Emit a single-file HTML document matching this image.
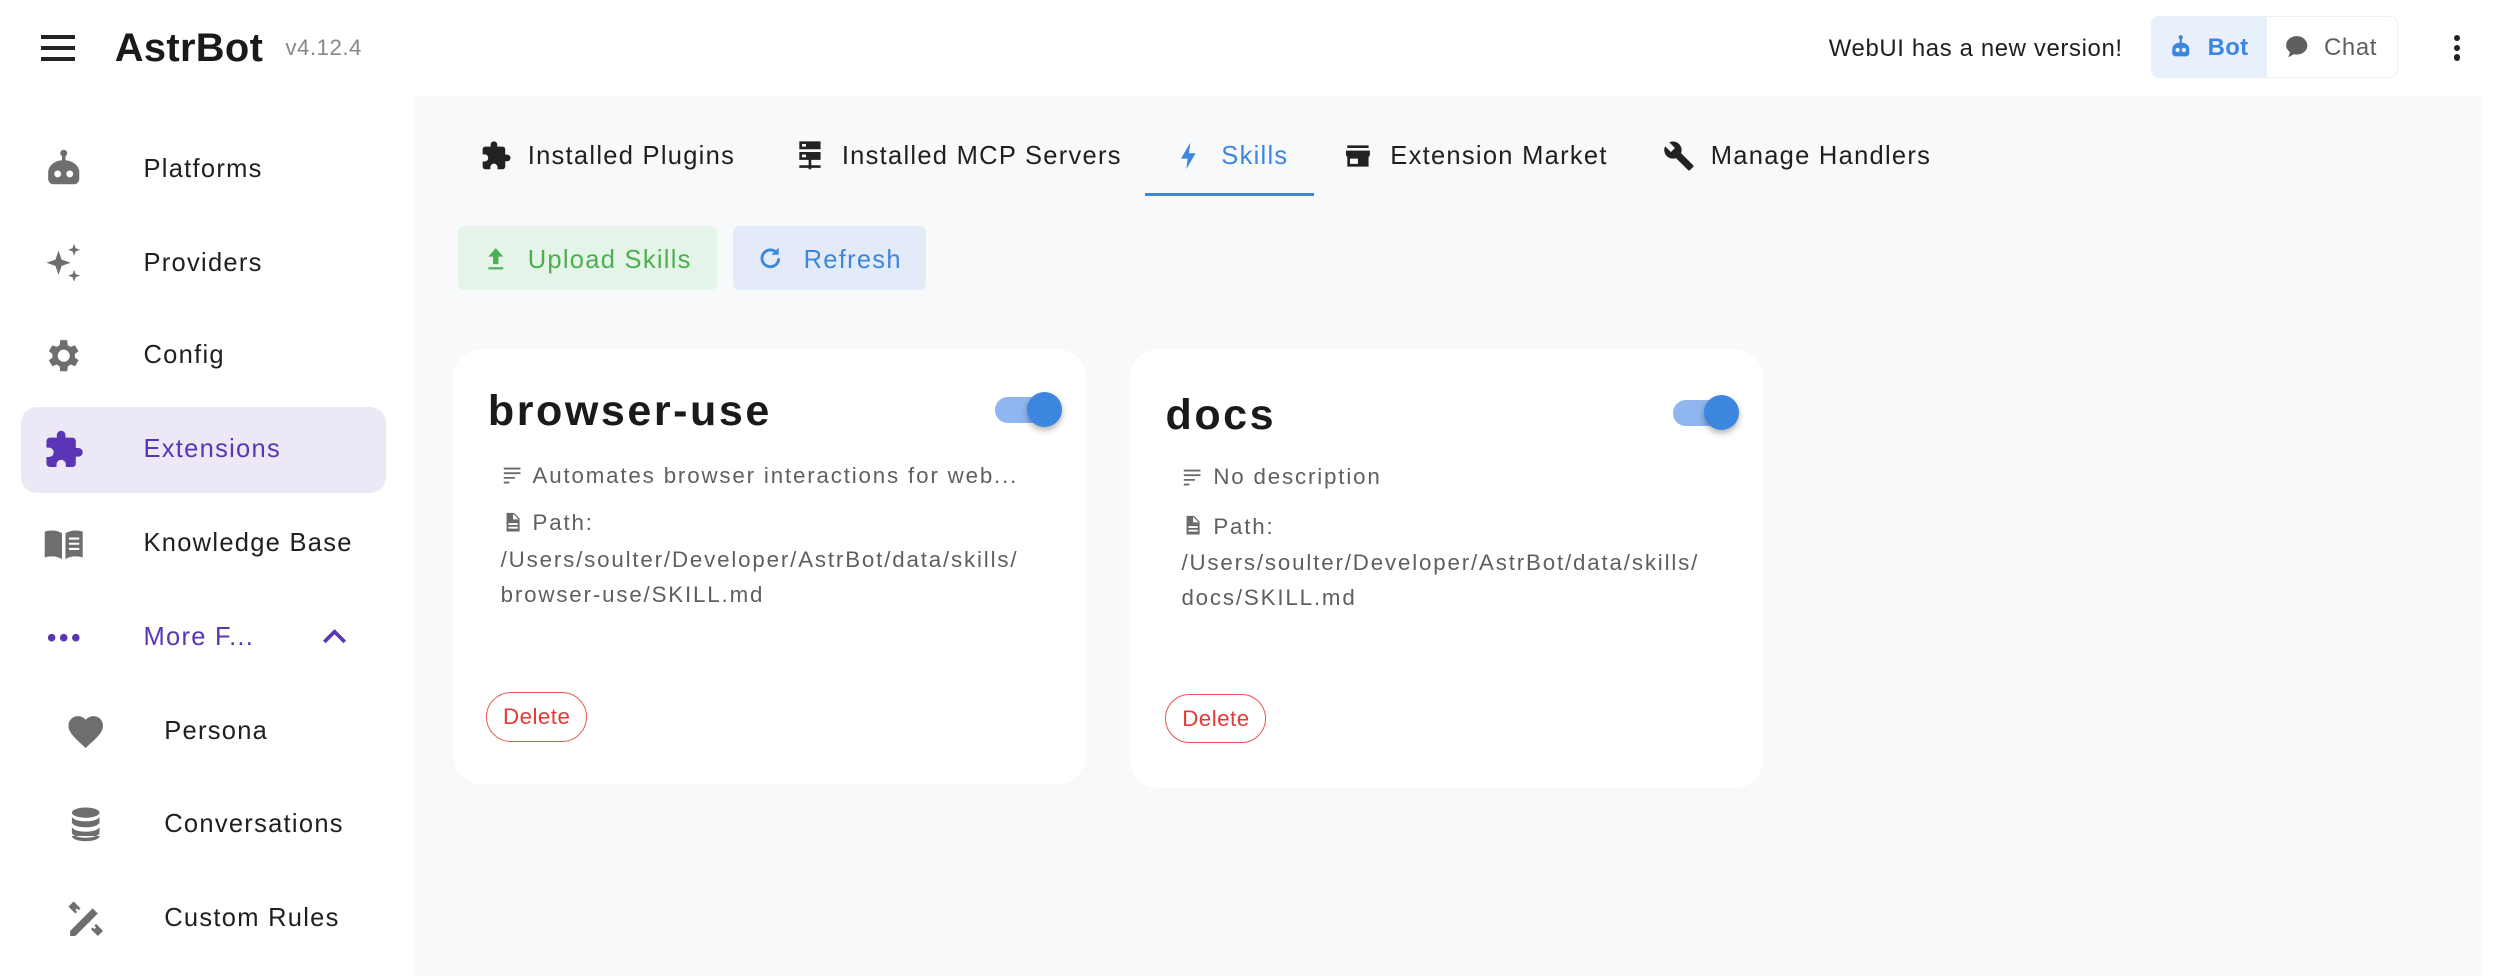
<!DOCTYPE html>
<html><head><meta charset="utf-8"><style>
html,body{margin:0;padding:0;width:2500px;height:976px;overflow:hidden;background:#fff}
#w{zoom:1.5944;width:1568px;height:612px;position:relative;font-family:"Liberation Sans",sans-serif;color:#1f1f1f;letter-spacing:0.8px}
.a{position:absolute}
.main{left:260px;top:60px;width:1296px;height:552px;background:#f8f9fb}
.si{position:absolute;left:0;width:260px;height:56px;font-size:16px}
.si svg{position:absolute;left:27px;top:16px;width:26px;height:26px;fill:#6e6e6e}
.si span{position:absolute;left:90px;top:20px}
.sub svg{left:41px}.sub span{left:103px}
.tab{position:absolute;top:88px;font-size:16px;font-weight:500;display:flex;align-items:center;gap:10px;white-space:nowrap}
.tab svg{width:20px;height:20px;fill:#222}
.card{position:absolute;top:219px;width:397px;height:273px;background:#fff;border-radius:18px}
.card h2{position:absolute;left:22px;top:24px;margin:0;font-size:27px;font-weight:700;color:#1a1a1a;letter-spacing:1.6px}
.tg{position:absolute;left:340px;top:30px;width:38px;height:16px;border-radius:8px;background:#8fb6ee}
.tg:after{content:"";position:absolute;right:-4px;top:-3px;width:22px;height:22px;border-radius:50%;background:#3d86e0;box-shadow:0 2px 4px rgba(0,0,0,.3)}
.ln{position:absolute;left:30px;font-size:14px;color:#5f5f5f;line-height:22px;white-space:nowrap;letter-spacing:1.15px}
.ln svg{width:14px;height:14px;fill:#6a6a6a;vertical-align:-2px;margin-right:6px}
.del{position:absolute;left:21px;top:215px;width:62px;height:30px;border:1px solid #e8574c;border-radius:16px;color:#e53935;font-size:14px;text-align:center;line-height:30px;letter-spacing:0.3px}
</style></head><body><div id="w">
<!-- header -->
<div class="a" style="left:26px;top:22px;width:21px;height:16px">
<div style="height:2.4px;background:#222;margin-bottom:4.4px"></div><div style="height:2.4px;background:#222;margin-bottom:4.4px"></div><div style="height:2.4px;background:#222"></div></div>
<div class="a" style="left:72px;top:16px;font-size:25px;font-weight:700;color:#1a1a1a;letter-spacing:0.2px">AstrBot</div>
<div class="a" style="left:179px;top:22px;font-size:14px;color:#888;letter-spacing:0.3px">v4.12.4</div>
<div class="a" style="left:1147px;top:22px;font-size:15px;color:#1f1f1f;letter-spacing:0.4px">WebUI has a new version!</div>
<div class="a" style="left:1349px;top:10px;width:155px;height:39px;border:1px solid #eceff3;border-radius:5px;overflow:hidden;box-sizing:border-box">
<div class="a" style="left:0;top:0;width:72px;height:39px;background:#e8f0fb"></div>
<svg class="a" style="left:10px;top:11px" width="16" height="16" viewBox="0 0 24 24" fill="#3d86e0"><circle cx="12" cy="3" r="2"/><rect x="11" y="3" width="2" height="5"/><path d="M4 14a8 6 0 0 1 16 0v4a3 3 0 0 1-3 3H7a3 3 0 0 1-3-3z"/><circle cx="9" cy="15" r="2" fill="#e8f0fb"/><circle cx="15" cy="15" r="2" fill="#e8f0fb"/></svg>
<div class="a" style="left:35px;top:11px;font-size:15px;font-weight:700;color:#3d86e0;letter-spacing:0.2px">Bot</div>
<svg class="a" style="left:83px;top:11px" width="16" height="16" viewBox="0 0 24 24" fill="#5f5f5f"><path d="M12 2C6.5 2 2 5.8 2 10.5c0 2.6 1.4 4.9 3.6 6.5L4 22l5.2-3c.9.2 1.8.3 2.8.3 5.5 0 10-3.8 10-8.5S17.5 2 12 2z"/></svg>
<div class="a" style="left:108px;top:11px;font-size:15px;color:#5f5f5f;letter-spacing:0.4px">Chat</div>
</div>
<div class="a" style="left:1539px;top:22px;width:4px"><div style="width:4px;height:4px;border-radius:2px;background:#222;margin-bottom:2px"></div><div style="width:4px;height:4px;border-radius:2px;background:#222;margin-bottom:2px"></div><div style="width:4px;height:4px;border-radius:2px;background:#222"></div></div>

<!-- sidebar -->
<div class="si" style="top:77px"><svg viewBox="0 0 24 24"><circle cx="12" cy="3" r="2"/><rect x="11" y="3" width="2" height="5"/><path d="M3 14a9 7 0 0 1 18 0v4a3 3 0 0 1-3 3H6a3 3 0 0 1-3-3z"/><circle cx="8.5" cy="15" r="2" fill="#fff"/><circle cx="15.5" cy="15" r="2" fill="#fff"/></svg><span>Platforms</span></div>
<div class="si" style="top:136px"><svg viewBox="0 0 24 24"><path d="M9 5l1.8 5.2L16 12l-5.2 1.8L9 19l-1.8-5.2L2 12l5.2-1.8z"/><path d="M18 1l.9 2.6L21.5 4.5l-2.6.9L18 8l-.9-2.6L14.5 4.5l2.6-.9z"/><path d="M18 16l.9 2.6 2.6.9-2.6.9L18 23l-.9-2.6-2.6-.9 2.6-.9z"/></svg><span>Providers</span></div>
<div class="si" style="top:194px"><svg viewBox="0 0 24 24"><path d="M19.4 13a7.5 7.5 0 0 0 0-2l2.1-1.6-2-3.5-2.5 1a7 7 0 0 0-1.7-1L15 3h-4l-.4 2.9a7 7 0 0 0-1.7 1l-2.5-1-2 3.5L6.5 11a7.5 7.5 0 0 0 0 2l-2.1 1.6 2 3.5 2.5-1a7 7 0 0 0 1.7 1L11 21h4l.4-2.9a7 7 0 0 0 1.7-1l2.5 1 2-3.5zM13 15.5a3.5 3.5 0 1 1 0-7 3.5 3.5 0 0 1 0 7z" transform="translate(-1 0)"/></svg><span>Config</span></div>
<div class="a" style="left:13px;top:255px;width:229px;height:54px;background:#ece8f6;border-radius:10px"></div>
<div class="si" style="top:253px;color:#5a35b5"><svg viewBox="0 0 24 24" style="fill:#5a35b5"><path d="M20.5 11H19V7a2 2 0 0 0-2-2h-4V3.5a2.5 2.5 0 0 0-5 0V5H4a2 2 0 0 0-2 2v3.8h1.5a2.7 2.7 0 0 1 0 5.4H2V20a2 2 0 0 0 2 2h3.8v-1.5a2.7 2.7 0 0 1 5.4 0V22H17a2 2 0 0 0 2-2v-4h1.5a2.5 2.5 0 0 0 0-5z"/></svg><span>Extensions</span></div>
<div class="si" style="top:312px"><svg viewBox="0 0 24 24"><path d="M1 5c3-1 7-1 10 1v15c-3-2-7-2-10-1zM23 5c-3-1-7-1-10 1v15c3-2 7-2 10-1z"/><path d="M15 9h6M15 12h6M15 15h6" stroke="#fff" stroke-width="1.2"/></svg><span>Knowledge Base</span></div>
<div class="si" style="top:371px;color:#5a35b5"><svg viewBox="0 0 24 24" style="fill:#5a35b5"><circle cx="5" cy="12" r="2.2"/><circle cx="12" cy="12" r="2.2"/><circle cx="19" cy="12" r="2.2"/></svg><span>More F...</span>
<svg viewBox="0 0 24 24" style="left:199px;fill:none;stroke:#5a35b5;stroke-width:2.5;width:22px;height:22px;top:18px"><path d="M5 15l7-7 7 7"/></svg></div>
<div class="si sub" style="top:430px"><svg viewBox="0 0 24 24"><path d="M12 21.4l-1.5-1.3C5.4 15.4 2 12.3 2 8.5 2 5.4 4.4 3 7.5 3c1.7 0 3.4.8 4.5 2.1C13.1 3.8 14.8 3 16.5 3 19.6 3 22 5.4 22 8.5c0 3.8-3.4 6.9-8.5 11.5z"/></svg><span>Persona</span></div>
<div class="si sub" style="top:488px"><svg viewBox="0 0 24 24"><ellipse cx="12" cy="5" rx="8" ry="3"/><path d="M4 7.5c0 1.7 3.6 3 8 3s8-1.3 8-3V11c0 1.7-3.6 3-8 3s-8-1.3-8-3zM4 13.5c0 1.7 3.6 3 8 3s8-1.3 8-3V17c0 1.7-3.6 3-8 3s-8-1.3-8-3zM4 19c0 1.7 3.6 3 8 3s8-1.3 8-3z" transform="translate(0 -0.5)"/></svg><span>Conversations</span></div>
<div class="si sub" style="top:547px"><svg viewBox="0 0 24 24"><path d="M3 19l13-13 3 3-13 13H3z"/><path d="M2 5l3-3 4 4-1 1-1-1-1 1 1 1-1 1zM15 18l1-1 1 1 1-1-1-1 1-1 4 4-3 3z"/></svg><span>Custom Rules</span></div>

<!-- main -->
<div class="a main"></div>
<div class="tab" style="left:301px"><svg viewBox="0 0 24 24"><path d="M20.5 11H19V7a2 2 0 0 0-2-2h-4V3.5a2.5 2.5 0 0 0-5 0V5H4a2 2 0 0 0-2 2v3.8h1.5a2.7 2.7 0 0 1 0 5.4H2V20a2 2 0 0 0 2 2h3.8v-1.5a2.7 2.7 0 0 1 5.4 0V22H17a2 2 0 0 0 2-2v-4h1.5a2.5 2.5 0 0 0 0-5z"/></svg>Installed Plugins</div>
<div class="tab" style="left:498px"><svg viewBox="0 0 24 24"><path d="M4 1h16v6H4zM4 9h16v6H4zM11 15h2v4h7v2h-7v1h-2v-1H4v-2h7z"/><rect x="6" y="3" width="3" height="2" fill="#f8f9fb"/><rect x="6" y="11" width="3" height="2" fill="#f8f9fb"/></svg>Installed MCP Servers</div>
<div class="tab" style="left:736px;color:#3d86e0"><svg viewBox="0 0 24 24" style="fill:#3d86e0"><path d="M13 2L6 14h5l-1 8 7-12h-5z"/></svg>Skills</div>
<div class="a" style="left:718px;top:121px;width:106px;height:2px;background:#3d86e0"></div>
<div class="tab" style="left:842px"><svg viewBox="0 0 24 24"><path d="M4 4h16v2H4zM3 8h18v3a2 2 0 0 1-1 1.7V20H4v-7.3A2 2 0 0 1 3 11zM6 14v4h6v-4z"/></svg>Extension Market</div>
<div class="tab" style="left:1043px"><svg viewBox="0 0 24 24"><path d="M22.7 19l-9.1-9.1c.9-2.3.4-5-1.5-6.9-2-2-5-2.4-7.4-1.3L9 6 6 9 1.6 4.7C.4 7.1.9 10.1 2.9 12.1c1.9 1.9 4.6 2.4 6.9 1.5l9.1 9.1c.4.4 1 .4 1.4 0l2.3-2.3c.5-.4.5-1.1.1-1.4z"/></svg>Manage Handlers</div>

<div class="a" style="left:287px;top:142px;width:163px;height:40px;background:#e5f4e8;border-radius:4px;color:#4caf50;font-size:16px;font-weight:500">
<svg class="a" style="left:16px;top:12px" width="16" height="16" viewBox="0 0 24 24" fill="#4caf50"><path d="M12 2l7 8h-4.5v7h-5v-7H5zM5 20h14v2H5z"/></svg><span class="a" style="left:44px;top:12px">Upload Skills</span></div>
<div class="a" style="left:460px;top:142px;width:121px;height:40px;background:#e3ebf8;border-radius:4px;color:#3d86e0;font-size:16px;font-weight:500">
<svg class="a" style="left:14px;top:11px" width="18" height="18" viewBox="0 0 24 24" fill="none" stroke="#3d86e0" stroke-width="2.4"><path d="M19 12a7 7 0 1 1-2.1-5"/><path d="M19 3v6h-6z" fill="#3d86e0" stroke="none"/></svg><span class="a" style="left:44px;top:12px">Refresh</span></div>

<div class="card" style="left:284px"><h2>browser-use</h2><div class="tg"></div>
<div class="ln" style="top:68px"><svg viewBox="0 0 24 24"><path d="M3 5h18v2H3zM3 10h18v2H3zM3 15h12v2H3zM3 20h6v2H3z"/></svg>Automates browser interactions for web...</div>
<div class="ln" style="top:98px"><svg viewBox="0 0 24 24"><path d="M6 2h8l6 6v14H6zM13 3v6h6z"/><path d="M8 13h10v2H8zM8 17h10v2H8z" fill="#fff"/></svg>Path:</div>
<div class="ln" style="top:121px">/Users/soulter/Developer/AstrBot/data/skills/<br>browser-use/SKILL.md</div>
<div class="del">Delete</div></div>

<div class="card" style="left:709px;height:275px"><h2 style="top:26px">docs</h2><div class="tg" style="top:32px"></div>
<div class="ln" style="top:69px;left:32px"><svg viewBox="0 0 24 24"><path d="M3 5h18v2H3zM3 10h18v2H3zM3 15h12v2H3zM3 20h6v2H3z"/></svg>No description</div>
<div class="ln" style="top:100px;left:32px"><svg viewBox="0 0 24 24"><path d="M6 2h8l6 6v14H6zM13 3v6h6z"/><path d="M8 13h10v2H8zM8 17h10v2H8z" fill="#fff"/></svg>Path:</div>
<div class="ln" style="top:123px;left:32px">/Users/soulter/Developer/AstrBot/data/skills/<br>docs/SKILL.md</div>
<div class="del" style="left:22px;top:216px">Delete</div></div>
</div></body></html>
